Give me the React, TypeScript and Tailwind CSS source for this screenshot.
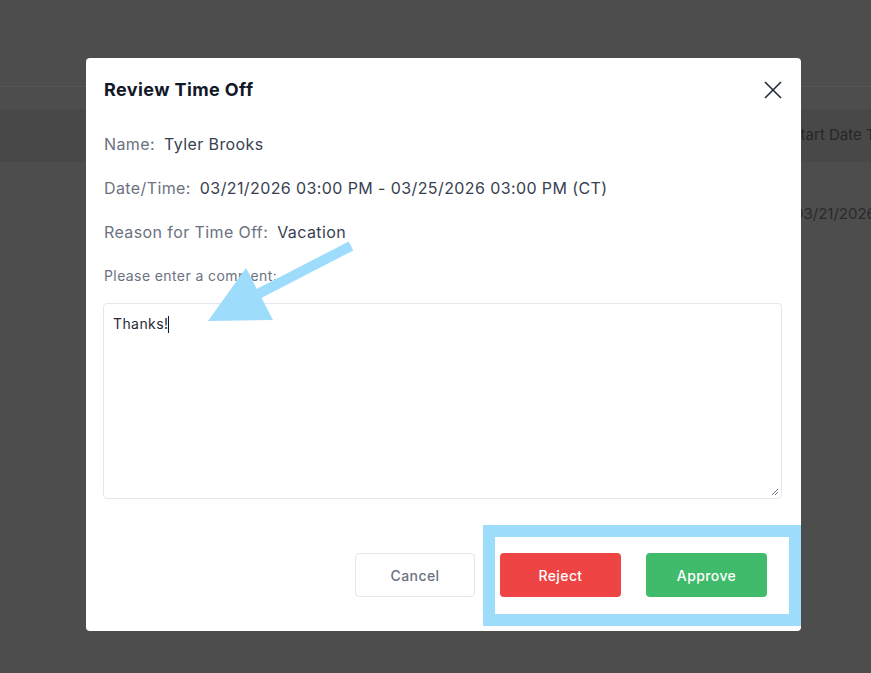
import React from "react";

export default function App() {
  return (
    <div
      className="relative w-[871px] h-[673px] overflow-hidden bg-[#4d4d4d] tracking-[0.4px]"
      style={{ fontFamily: "Inter, 'Noto Sans', sans-serif" }}
    >
      {/* background page (dimmed) */}
      <div className="flex flex-col">
        <div className="h-[87px] border-b border-[#555555]" />
        <div className="h-[22px]" />
        <div className="h-[53px] bg-[#484848] flex items-center pl-[791px] text-[15px] tracking-normal text-[#262626] whitespace-nowrap">
          Start Date Time
        </div>
        <div className="h-[104px] flex items-center pl-[794px] text-[15px] tracking-normal text-[#2a2a2a] whitespace-nowrap">
          03/21/2026
        </div>
      </div>

      {/* modal */}
      <div className="absolute left-[86px] top-[58px] w-[715px] h-[573px] bg-white rounded-[4px] pl-[17px] pr-[19px] pt-[20px]">
        <div className="flex items-center justify-between pl-px">
          <h2 className="text-[18px] leading-6 font-bold text-[#111827]">Review Time Off</h2>
          <svg width="18" height="18" viewBox="0 0 18 18">
            <path d="M1 1 L17 17 M17 1 L1 17" stroke="#1f2937" strokeWidth="1.6" />
          </svg>
        </div>

        <div className="mt-[30px] pl-px flex flex-col gap-5 text-[16px] leading-6">
          <div>
            <span className="text-[#6b7280]">Name:</span>
            <span className="ml-[9px] text-[#374151]">Tyler Brooks</span>
          </div>
          <div>
            <span className="text-[#6b7280]">Date/Time:</span>
            <span className="ml-[9px] text-[#374151]">03/21/2026 03:00 PM - 03/25/2026 03:00 PM (CT)</span>
          </div>
          <div>
            <span className="text-[#6b7280]">Reason for Time Off:</span>
            <span className="ml-[9px] text-[#374151]">Vacation</span>
          </div>
        </div>

        <div className="mt-[22px] pl-px text-[14px] leading-5 text-[#6b7280]">Please enter a comment:</div>

        <div className="relative mt-[17px] h-[196px] border border-[#e5e7eb] rounded-[4px] px-[9px] pt-[10px] text-[14px] leading-5 text-[#1f2937]">
          <span>Thanks!</span>
          <span className="inline-block w-px h-[17px] bg-[#111827] align-middle -mt-[2px]" />
          <svg width="8" height="8" viewBox="0 0 8 8" className="absolute right-[2px] bottom-[2px]">
            <path d="M7 1 L1 7 M7 4 L4 7" stroke="#6b7280" strokeWidth="1" />
          </svg>
        </div>

        <div className="mt-[54px] flex justify-end gap-[25px] pr-[15px] text-[14px] font-medium">
          <button className="w-[120px] h-[44px] rounded-[4px] border border-[#e5e7eb] bg-white text-[#6b7280]">
            Cancel
          </button>
          <button className="w-[121px] h-[44px] rounded-[4px] bg-[#ef4444] text-white">Reject</button>
          <button className="w-[121px] h-[44px] rounded-[4px] bg-[#3fbb6b] text-white">Approve</button>
        </div>
      </div>

      {/* annotation: highlight box */}
      <div className="absolute left-[483px] top-[525px] w-[318px] h-[101px] border-[12px] border-[#9ddcfb]" />

      {/* annotation: arrow */}
      <svg className="absolute left-0 top-0" width="871" height="673" viewBox="0 0 871 673">
        <line x1="351" y1="246" x2="258" y2="294" stroke="#9ddcfb" strokeWidth="10" />
        <polygon points="208,321 246,268 273,320" fill="#9ddcfb" />
      </svg>
    </div>
  );
}
